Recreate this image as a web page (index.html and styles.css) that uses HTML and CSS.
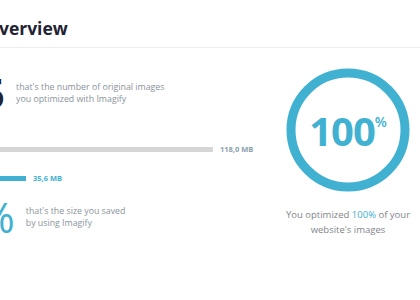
FILE: index.html
```html
<!DOCTYPE html>
<html lang="en">
<head>
<meta charset="UTF-8">
<title>Imagify Overview</title>
<link rel="stylesheet" href="styles.css">
</head>
<body>

<div class="page">
  <h2 class="title">Overview</h2>

  <div class="content">
    <div class="stats">
      <div class="stat">
        <span class="stat-num">15</span>
        <p class="stat-desc">that's the number of original images<br>you optimized with Imagify</p>
      </div>

      <div class="bars">
        <div class="bar-row">
          <div class="bar bar-original" style="width: 253px"></div>
          <span class="bar-label">118,0 MB</span>
        </div>
        <div class="bar-row">
          <div class="bar bar-optimized" style="width: 66px"></div>
          <span class="bar-label bar-label-blue">35,6 MB</span>
        </div>
      </div>

      <div class="stat stat-saved">
        <span class="stat-num stat-num-blue">70%</span>
        <p class="stat-desc">that's the size you saved<br>by using Imagify</p>
      </div>
    </div>

    <div class="chart">
      <div class="chart-circle">
        <svg width="124" height="124" viewBox="0 0 124 124">
          <circle cx="62" cy="62" r="57" fill="none" stroke="#40b1d0" stroke-width="9"/>
        </svg>
        <div class="chart-value">100<sup>%</sup></div>
      </div>
      <p class="chart-caption">You optimized <span class="blue">100%</span> of your<br>website's images</p>
    </div>
  </div>
</div>

</body>
</html>
```

FILE: styles.css
```css
body {
  margin: 0;
  font-family: "Open Sans", Arial, sans-serif;
  background-color: #fff;
  overflow: hidden;
}

.page {
  margin-left: -40px;
  width: 480px;
}

.title {
  margin: 0;
  padding: 16px 0 7px 25px;
  font-size: 17.5px;
  font-weight: 700;
  color: #1f2332;
  border-bottom: 1px solid #eeeeee;
}

.content {
  display: flex;
}

.stats {
  width: 318px;
  padding-top: 25px;
}

.stat {
  display: flex;
  align-items: center;
}

.stat-num {
  font-size: 42px;
  line-height: 40px;
  font-weight: 700;
  color: #1f2332;
  margin-left: -3px;
}

.stat-num-blue {
  color: #40b1d0;
  font-weight: 400;
}

.stat-saved .stat-num {
  margin-left: -28px;
}

.stat-desc {
  margin: 0 0 0 11px;
  font-size: 8.8px;
  line-height: 12.5px;
  color: #8a949c;
}

.bars {
  padding: 29px 0 12px;
}

.bar-row {
  display: flex;
  align-items: center;
  gap: 7px;
  height: 14px;
}

.bar-row + .bar-row {
  margin-top: 15px;
}

.bar {
  height: 5px;
}

.bar-original {
  background-color: #d6d6d6;
}

.bar-optimized {
  background-color: #40b1d0;
}

.bar-label {
  font-size: 7.5px;
  font-weight: 700;
  color: #8ba0ad;
}

.bar-label-blue {
  color: #40b1d0;
}

.chart {
  width: 140px;
  padding-top: 20px;
  text-align: center;
}

.chart-circle {
  position: relative;
  width: 124px;
  height: 124px;
  margin: 0 auto;
}

.chart-circle svg {
  display: block;
}

.chart-value {
  position: absolute;
  inset: 0;
  display: flex;
  align-items: center;
  justify-content: center;
  font-size: 40px;
  font-weight: 700;
  color: #40b1d0;
  letter-spacing: -1px;
}

.chart-value sup {
  font-size: 14px;
  font-weight: 600;
  margin-top: -18px;
  letter-spacing: 0;
}

.chart-caption {
  margin: 15px 0 0;
  font-size: 9.5px;
  line-height: 15px;
  color: #7f868c;
}

.blue {
  color: #40b1d0;
}
```
